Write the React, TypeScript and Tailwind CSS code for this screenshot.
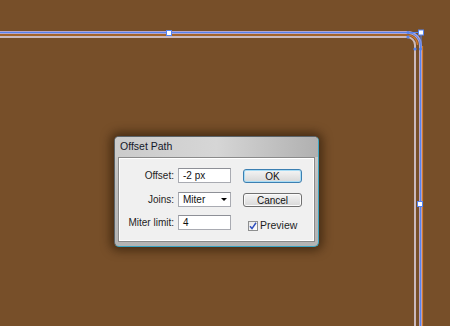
import React from 'react';

const font = { fontFamily: '"Liberation Sans", Arial, sans-serif' };

function Artwork() {
  // the offset path artwork behind the dialog
  return (
    <svg className="absolute inset-0" width="450" height="326" viewBox="0 0 450 326">
      {/* outer path */}
      <path d="M0 32.5 H407 A13 13 0 0 1 420.5 45.5 V326" fill="none" stroke="#b3a6d2" strokeWidth="3" />
      {/* orange rim */}
      <path d="M0 35 H407 A10 10 0 0 1 417.5 45" fill="none" stroke="#d27a2c" strokeWidth="1.2" />
      <path d="M422.5 46 V326" fill="none" stroke="#d27a2c" strokeWidth="1.2" />
      {/* inner offset path */}
      <path d="M0 37 H407 A8 8 0 0 1 415 45 V326" fill="none" stroke="#cbb9bd" strokeWidth="2" />
      {/* selection */}
      <path d="M0 32.5 H407 A13 13 0 0 1 420.5 45.5 V326" fill="none" stroke="#5583ef" strokeWidth="1" />
      <path d="M408 32.5 H421 V49" fill="none" stroke="#5583ef" strokeWidth="1" />
      <circle cx="408" cy="32.5" r="1.6" fill="#5583ef" />
      <circle cx="408" cy="37" r="1.6" fill="#5583ef" />
      <circle cx="415" cy="49" r="1.6" fill="#5583ef" />
      <circle cx="420.5" cy="49" r="1.6" fill="#5583ef" />
      {/* anchors */}
      <rect x="418.5" y="30" width="5" height="5" fill="#fff" stroke="#5583ef" strokeWidth="1" />
      <rect x="166.5" y="30.5" width="5" height="5" fill="#fff" stroke="#5583ef" strokeWidth="1" />
      <rect x="417.5" y="201.5" width="5" height="5" fill="#fff" stroke="#5583ef" strokeWidth="1" />
    </svg>
  );
}

function Field({ value, select }: { value: string; select?: boolean }) {
  return (
    <div className="w-[53px] h-[15px] bg-white border border-[#a9abb2] border-t-[#8e9097] flex items-center pl-[4px] text-[10px] text-[#111] relative">
      {value}
      {select && (
        <span className="ml-auto mr-[3px] w-0 h-0 border-l-[3px] border-r-[3px] border-t-[3px] border-l-transparent border-r-transparent border-t-black" />
      )}
    </div>
  );
}

function Button({ label, primary }: { label: string; primary?: boolean }) {
  return (
    <div
      className={
        'w-[59px] h-[14px] rounded-[3px] flex items-center justify-center text-[10px] text-[#111] bg-gradient-to-b from-[#f5f5f5] to-[#d8d8d8] border ' +
        (primary ? 'border-[#3c7fb1] shadow-[inset_0_0_0_1px_#a8dcf5]' : 'border-[#707070] shadow-[inset_0_0_0_1px_#fbfbfb]')
      }
    >
      {label}
    </div>
  );
}

export default function App() {
  return (
    <div className="relative w-[450px] h-[326px] bg-[#774f29] overflow-hidden" style={font}>
      <Artwork />

      {/* Offset Path dialog */}
      <div className="absolute left-[114px] top-[136px] w-[205px] h-[111px] flex flex-col rounded-[5px] border border-[#5c646a] border-r-[#3aa5c4] border-b-[#3aa5c4] bg-gradient-to-b from-[#d0d0d0] via-[#bdbdbd] to-[#b4b4b4] shadow-[0_0_10px_4px_rgba(35,18,4,0.55)]">
        <div className="h-[20px] flex items-center pl-[5px] text-[10.5px] text-[#14182a] bg-gradient-to-r from-[#cbcbcb] via-[#d6d6d6] to-[#b0b0b0] rounded-t-[4px]">
          Offset Path
        </div>
        <div className="mx-[3px] mb-[4px] flex-1 bg-[#f0f0f0] border border-[#8a8a8a] shadow-[inset_0_0_0_1px_#ffffff] flex text-[10px] text-[#1e1e1e]">
          <div className="w-[112px] flex flex-col pt-[10px]">
            <div className="flex items-center">
              <span className="w-[56px] text-right pr-[1px]">Offset:</span>
              <span className="w-[3px]" />
              <Field value="-2 px" />
            </div>
            <div className="flex items-center mt-[9px]">
              <span className="w-[56px] text-right pr-[1px]">Joins:</span>
              <span className="w-[3px]" />
              <Field value="Miter" select />
            </div>
            <div className="flex items-center mt-[8px]">
              <span className="w-[56px] text-right pr-[1px]">Miter limit:</span>
              <span className="w-[3px]" />
              <Field value="4" />
            </div>
          </div>
          <div className="ml-[12px] flex flex-col pt-[11px]">
            <Button label="OK" primary />
            <div className="mt-[10px]">
              <Button label="Cancel" />
            </div>
            <div className="mt-[11px] ml-[5px] flex items-center gap-[2px]">
              <span className="w-[10px] h-[10px] bg-gradient-to-br from-[#e6e6e6] to-white border border-[#8e8f8f] flex items-center justify-center">
                <svg width="8" height="8" viewBox="0 0 8 8">
                  <path d="M1 4.2 L3 6.6 L7 0.8" fill="none" stroke="#2f4fbf" strokeWidth="1.5" />
                </svg>
              </span>
              <span className="text-[10.5px]">Preview</span>
            </div>
          </div>
        </div>
      </div>
    </div>
  );
}
